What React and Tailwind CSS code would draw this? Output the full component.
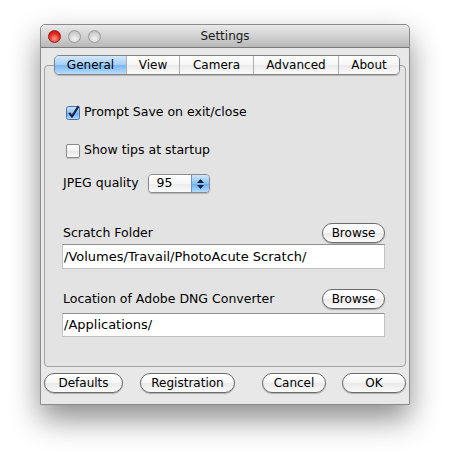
import React from 'react';

const font = { fontFamily: '"DejaVu Sans", "Liberation Sans", sans-serif' };

const tabs = [
  { label: 'General', w: 'w-[71px]', active: true },
  { label: 'View', w: 'w-[53px]' },
  { label: 'Camera', w: 'w-[74px]' },
  { label: 'Advanced', w: 'w-[85px]' },
  { label: 'About', w: 'w-[61px]' },
];

const AquaButton = ({ children, className = '' }) => (
  <button
    className={`h-[20px] rounded-full border border-[#6c6c6c] bg-[linear-gradient(#ffffff,#f6f6f6_50%,#e9e9e9_52%,#fbfbfb)] shadow-[0_1px_1px_rgba(0,0,0,0.25)] text-[12px] text-black leading-none flex items-center justify-center ${className}`}
  >
    {children}
  </button>
);

const CheckBox = ({ checked }) =>
  checked ? (
    <svg width="15" height="15" viewBox="0 0 15 15">
      <defs>
        <linearGradient id="cb" x1="0" y1="0" x2="0" y2="1">
          <stop offset="0" stopColor="#cfe6fb" />
          <stop offset="0.5" stopColor="#8dc2f2" />
          <stop offset="0.52" stopColor="#6eaef0" />
          <stop offset="1" stopColor="#b7defc" />
        </linearGradient>
      </defs>
      <rect x="0.5" y="1.5" width="13" height="13" rx="2" fill="url(#cb)" stroke="#4a6fa8" />
      <path d="M3.2 7.8 L6 11.6 L12.6 1.2" fill="none" stroke="#16264f" strokeWidth="2.2" strokeLinejoin="round" />
    </svg>
  ) : (
    <div className="w-[14px] h-[14px] mt-[1px] rounded-[2px] border border-[#8a8a8a] bg-[linear-gradient(#ffffff,#f2f2f2_50%,#e6e6e6_52%,#fafafa)] shadow-[0_1px_1px_rgba(0,0,0,0.15)]" />
  );

const Field = ({ value, className = '' }) => (
  <div
    className={`w-[323px] bg-white border border-[#c2c2c2] border-t-[#8f8f8f] flex items-center pl-[1px] text-[13px] text-black ${className}`}
  >
    {value}
  </div>
);

export default function App() {
  return (
    <div className="w-[450px] h-[460px] bg-white pt-[24px] pl-[40px]" style={font}>
      <div className="w-[370px] h-[381px] flex flex-col rounded-t-[5px] border border-[#8c8c8c] bg-[#e8e8e8] shadow-[0_14px_30px_rgba(0,0,0,0.45)]">
        {/* title bar */}
        <div className="h-[23px] grid grid-cols-[1fr_auto_1fr] items-center rounded-t-[5px] border-b border-[#7a7a7a] bg-[linear-gradient(#e9e9e9,#d2d2d2_50%,#b8b8b8)]">
          <div className="flex items-center gap-[7px] pl-[7px]">
            <span className="w-[13px] h-[13px] rounded-full border border-[#9c1a12] bg-[radial-gradient(circle_at_50%_70%,#ff9a8a,#e3291c_55%,#b51208)]" />
            <span className="w-[13px] h-[13px] rounded-full border border-[#9a9a9a] bg-[radial-gradient(circle_at_50%_70%,#f2f2f2,#cfcfcf_60%,#b4b4b4)]" />
            <span className="w-[13px] h-[13px] rounded-full border border-[#9a9a9a] bg-[radial-gradient(circle_at_50%_70%,#f2f2f2,#cfcfcf_60%,#b4b4b4)]" />
          </div>
          <div className="text-[12px] text-[#1a1a1a]">Settings</div>
          <div />
        </div>

        {/* body */}
        <div className="flex-1 px-[3px] pt-[7px] flex flex-col">
          <div className="relative z-10 -mb-[10px] pl-[10px] flex">
            <div className="flex h-[20px] rounded-[5px] border border-[#838383] overflow-hidden shadow-[0_1px_1px_rgba(0,0,0,0.2)]">
              {tabs.map((t, i) => (
                <div
                  key={t.label}
                  className={`${t.w} h-full flex items-center justify-center text-[12px] text-black ${
                    i > 0 ? 'border-l border-[#b0b0b0]' : ''
                  } ${
                    t.active
                      ? 'bg-[linear-gradient(#d2e8fc,#a3cff6_50%,#7cb7ef_52%,#b7defd)]'
                      : 'bg-[linear-gradient(#ffffff,#f6f6f6_50%,#ebebeb_52%,#fafafa)]'
                  }`}
                >
                  {t.label}
                </div>
              ))}
            </div>
          </div>

          <div className="h-[302px] rounded-[4px] border border-[#a4a4a4] bg-[#e3e3e3] pl-[17px] pr-[20px] pt-[37px] flex flex-col">
            <div className="h-[18px] flex items-center gap-[3px] ml-[4px] text-[12.5px] text-black">
              <CheckBox checked />
              <span>Prompt Save on exit/close</span>
            </div>
            <div className="h-[18px] mt-[20px] flex items-center gap-[4px] ml-[4px] text-[12.5px] text-black">
              <CheckBox />
              <span>Show tips at startup</span>
            </div>
            <div className="h-[19px] mt-[15px] flex items-center text-[12.5px] text-black">
              <span className="ml-[1px]">JPEG quality</span>
              <div className="ml-[9px] w-[62px] h-[19px] flex rounded-[4px] border border-[#8a8a8a] overflow-hidden shadow-[0_1px_1px_rgba(0,0,0,0.2)]">
                <div className="flex-1 flex items-center pl-[8px] text-[12.5px] bg-[linear-gradient(#ffffff,#f6f6f6_50%,#eaeaea_52%,#fbfbfb)]">
                  95
                </div>
                <div className="w-[18px] flex flex-col items-center justify-center gap-[2px] border-l border-[#6f93c4] bg-[linear-gradient(#cfe6fb,#8dc2f2_50%,#6cadef_52%,#b3dcfc)]">
                  <svg width="7" height="4" viewBox="0 0 7 4">
                    <path d="M3.5 0 L7 4 L0 4 Z" fill="#10203f" />
                  </svg>
                  <svg width="7" height="4" viewBox="0 0 7 4">
                    <path d="M0 0 L7 0 L3.5 4 Z" fill="#10203f" />
                  </svg>
                </div>
              </div>
            </div>

            <div className="mt-[30px] flex items-center justify-between w-[323px]">
              <span className="text-[12.5px] text-black ml-[1px]">Scratch Folder</span>
              <AquaButton className="w-[63px]">Browse</AquaButton>
            </div>
            <Field value="/Volumes/Travail/PhotoAcute Scratch/" className="h-[25px] mt-[1px]" />

            <div className="mt-[20px] flex items-center justify-between w-[323px]">
              <span className="text-[12.5px] text-black ml-[1px]">Location of Adobe DNG Converter</span>
              <AquaButton className="w-[63px]">Browse</AquaButton>
            </div>
            <Field value="/Applications/" className="h-[24px] mt-[4px]" />
          </div>

          <div className="mt-[6px] flex items-center">
            <AquaButton className="w-[79px]">Defaults</AquaButton>
            <AquaButton className="w-[95px] ml-[17px]">Registration</AquaButton>
            <div className="flex-1" />
            <AquaButton className="w-[64px]">Cancel</AquaButton>
            <AquaButton className="w-[64px] ml-[16px]">OK</AquaButton>
          </div>
        </div>
      </div>
    </div>
  );
}
